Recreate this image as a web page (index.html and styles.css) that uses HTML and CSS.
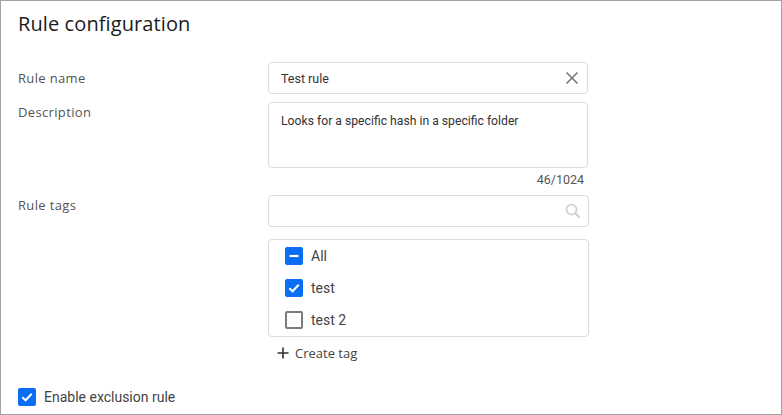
FILE: index.html
```html
<!DOCTYPE html>
<html>
<head>
<meta charset="utf-8">
<link rel="stylesheet" href="styles.css">
</head>
<body>
<div class="frame">
  <h1 class="title">Rule configuration</h1>
  <div class="form">
    <div class="label l-name">Rule name</div>
    <div class="field">
      <div class="input">
        <span class="value">Test rule</span>
        <svg class="icon-x" width="14" height="14" viewBox="0 0 14 14"><path d="M1.5 1.5 L12.5 12.5 M12.5 1.5 L1.5 12.5" stroke="#777" stroke-width="1.6" fill="none"/></svg>
      </div>
    </div>
    <div class="label l-desc">Description</div>
    <div class="field">
      <div class="textarea"><span class="value">Looks for a specific hash in a specific folder</span></div>
      <div class="counter">46/1024</div>
    </div>
    <div class="label l-tags">Rule tags</div>
    <div class="field">
      <div class="input search">
        <svg class="icon-search" width="16" height="16" viewBox="0 0 16 16"><circle cx="6.5" cy="6.5" r="5" stroke="#ccc" stroke-width="1.6" fill="none"/><path d="M10.2 10.2 L14.5 14.5" stroke="#ccc" stroke-width="1.8"/></svg>
      </div>
      <div class="taglist">
        <div class="tagrow"><span class="cb on"><svg width="18" height="18" viewBox="0 0 18 18"><path d="M4.5 9 H13.5" stroke="#fff" stroke-width="2.2"/></svg></span><span class="tagname">All</span></div>
        <div class="tagrow"><span class="cb on"><svg width="18" height="18" viewBox="0 0 18 18"><path d="M4.3 9.2 L7.6 12.3 L13.7 5.8" stroke="#fff" stroke-width="2" fill="none"/></svg></span><span class="tagname">test</span></div>
        <div class="tagrow"><span class="cb off"></span><span class="tagname">test 2</span></div>
      </div>
      <div class="create"><svg width="12" height="12" viewBox="0 0 12 12"><path d="M6 0.5 V11.5 M0.5 6 H11.5" stroke="#333" stroke-width="1.6"/></svg><span>Create tag</span></div>
    </div>
  </div>
  <div class="enable"><span class="cb on"><svg width="18" height="18" viewBox="0 0 18 18"><path d="M4.3 9.2 L7.6 12.3 L13.7 5.8" stroke="#fff" stroke-width="2" fill="none"/></svg></span><span class="enable-text">Enable exclusion rule</span></div>
</div>
</body>
</html>
```
FILE: styles.css
```css
* { box-sizing: border-box; }
html, body { margin: 0; padding: 0; background: #fff; }
.frame {
  width: 782px;
  height: 415px;
  border: 1px solid #a3a3a3;
  padding: 0 17px;
  font-family: "Open Sans", sans-serif;
  overflow: hidden;
}
.title {
  margin: 0;
  padding-top: 10px;
  height: 61px;
  font-size: 20px;
  font-weight: 500;
  color: #1b1b1b;
  line-height: 26px;
  letter-spacing: 0.1px;
}
.form {
  display: grid;
  grid-template-columns: 250px 321px;
  column-gap: 0;
  align-items: start;
}
.label {
  font-size: 13px;
  color: #555;
  line-height: 18px;
  letter-spacing: 0.35px;
}
.l-name { padding-top: 7px; height: 40px; }
.l-desc { padding-top: 1px; }
.l-tags { padding-top: 1px; }
.field { display: flex; flex-direction: column; }
.input {
  height: 32px;
  border: 1px solid #dcdcdc;
  border-radius: 4px;
  display: flex;
  align-items: center;
  justify-content: space-between;
  padding: 0 8px 0 12px;
  margin-bottom: 8px;
  width: 320px;
}
.value {
  font-family: Roboto, sans-serif;
  font-size: 12.5px;
  color: #333;
}
.textarea {
  height: 66px;
  width: 320px;
  border: 1px solid #dcdcdc;
  border-radius: 4px;
  padding: 8px 12px;
  line-height: 16px;
}
.textarea .value { font-size: 12.2px; }
.counter {
  text-align: right;
  font-family: Roboto, sans-serif;
  font-size: 12.5px;
  color: #555;
  width: 316px;
  line-height: 18px;
  margin-top: 3px;
  margin-bottom: 6px;
}
.search { justify-content: flex-end; width: 321px; margin-bottom: 12px; padding-right: 7px; }
.taglist {
  width: 321px;
  border: 1px solid #dcdcdc;
  border-radius: 4px;
  padding: 0;
}
.tagrow {
  height: 32px;
  display: flex;
  align-items: center;
  padding-left: 16px;
  gap: 8px;
}
.cb {
  width: 18px;
  height: 18px;
  border-radius: 2px;
  display: inline-flex;
  flex: none;
}
.cb.on { background: #0a6ef5; }
.cb.off { border: 2px solid #7a7a7a; }
.tagname {
  font-family: Roboto, sans-serif;
  font-size: 14px;
  color: #444;
}
.create {
  display: flex;
  align-items: center;
  gap: 6px;
  padding-left: 9px;
  margin-top: 7px;
  font-size: 13px;
  color: #444;
  height: 18px;
}
.enable {
  display: flex;
  align-items: center;
  gap: 8px;
  margin-top: 26px;
}
.enable-text {
  font-family: Roboto, sans-serif;
  font-size: 14px;
  color: #444;
}
```
